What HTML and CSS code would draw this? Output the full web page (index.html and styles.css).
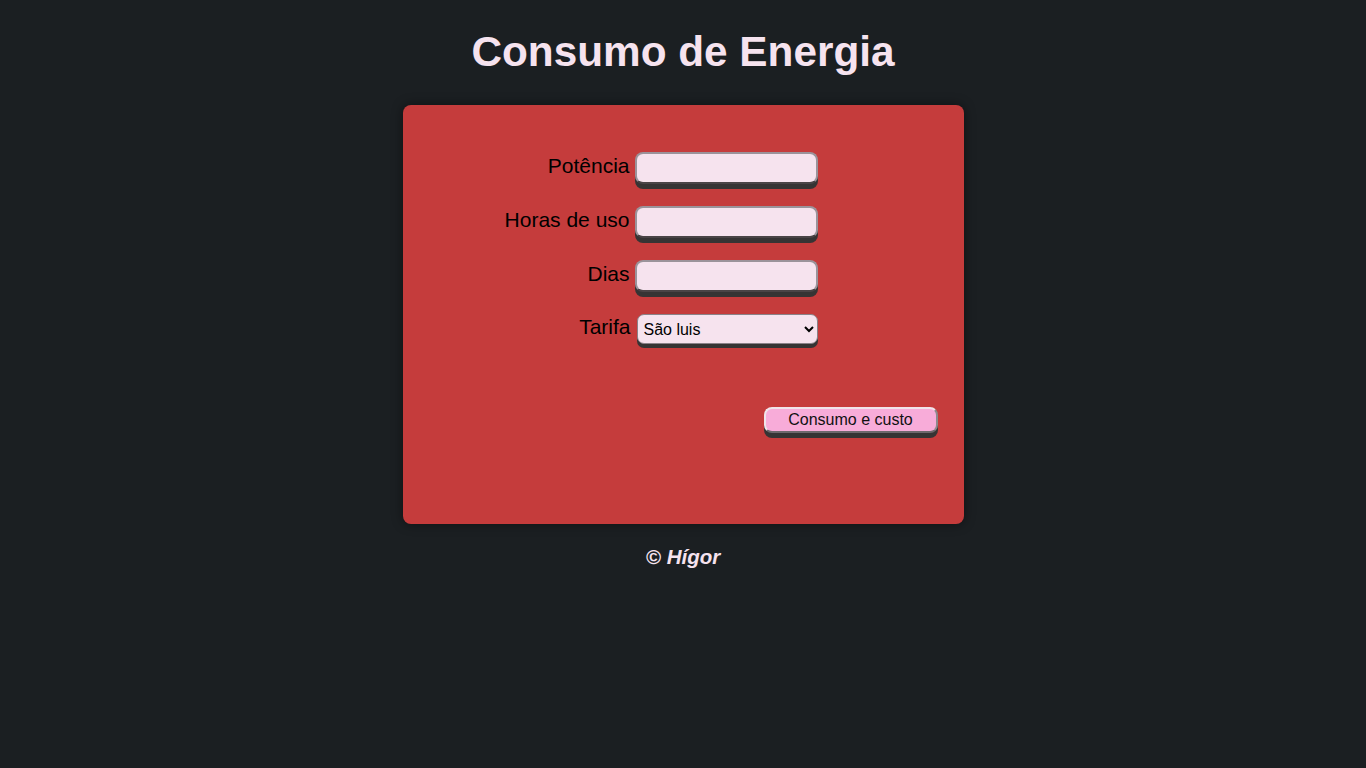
FILE: index.html
```html
<!DOCTYPE html>
<html lang="pt-BR">
<head>
<meta charset="utf-8">
<title>Consumo de Energia</title>
<link rel="stylesheet" href="styles.css">
</head>
<body>
<h1 class="title">Consumo de Energia</h1>
<main class="card">
  <form class="fields">
    <label class="label" for="pot">Potência</label>
    <input class="field" id="pot" type="text">
    <label class="label" for="horas">Horas de uso</label>
    <input class="field" id="horas" type="text">
    <label class="label" for="dias">Dias</label>
    <input class="field" id="dias" type="text">
    <label class="label label-select" for="tarifa">Tarifa</label>
    <select class="select" id="tarifa">
      <option>São luis</option>
    </select>
  </form>
  <div class="actions">
    <button class="btn" type="button">Consumo e custo</button>
  </div>
</main>
<footer class="footer">© Hígor</footer>
</body>
</html>
```

FILE: styles.css
```css
html, body {
  margin: 0;
  padding: 0;
}
body {
  background: #1b1f22;
  font-family: "Liberation Sans", Arial, sans-serif;
  color: #000;
}
.title {
  margin: 28px 0 29px;
  text-align: center;
  font-size: 42.3px;
  line-height: 48px;
  font-weight: bold;
  color: #f6e3ef;
}
.card {
  box-sizing: border-box;
  width: 561px;
  height: 419px;
  margin: 0 auto;
  padding: 47px 26px 0 0;
  background: #c53c3c;
  border-radius: 8px;
  box-shadow: 0 0 12px rgba(0, 0, 0, 0.45);
}
.fields {
  display: grid;
  grid-template-columns: 227px 183px;
  column-gap: 5px;
  row-gap: 22px;
  align-items: center;
}
.label {
  text-align: right;
  font-size: 21px;
  line-height: 24px;
  margin-top: -4px;
}
.label-select {
  margin-right: -1px;
}
.field {
  box-sizing: border-box;
  width: 183px;
  height: 32px;
  margin: 0;
  background: #f6e3ee;
  border: 2px solid #9b939a;
  border-bottom-color: #4a4446;
  border-radius: 8px;
  box-shadow: 0 5px 0 #363434;
  font: 16px "Liberation Sans", Arial, sans-serif;
}
.select {
  box-sizing: border-box;
  width: 181px;
  height: 30px;
  margin: 0 0 0 2px;
  padding: 0 2px;
  background: #f6e3ee;
  border: 1px solid #8a8288;
  border-radius: 7px;
  box-shadow: 0 4px 0 #363434;
  font: 16px "Liberation Sans", Arial, sans-serif;
  color: #000;
}
.actions {
  display: flex;
  justify-content: flex-end;
  margin-top: 63px;
}
.btn {
  box-sizing: border-box;
  width: 174px;
  height: 26px;
  margin: 0;
  padding: 0;
  background: #f8acd9;
  border: 2px solid #f0e4ea;
  border-right-color: #8e888c;
  border-bottom-color: #6e686c;
  border-radius: 8px;
  box-shadow: 0 5px 0 #363434;
  font: 16px "Liberation Sans", Arial, sans-serif;
  color: #111;
}
.footer {
  margin-top: 21px;
  text-align: center;
  font-size: 20.5px;
  line-height: 23px;
  font-weight: bold;
  font-style: italic;
  color: #f6e3ef;
}
```
